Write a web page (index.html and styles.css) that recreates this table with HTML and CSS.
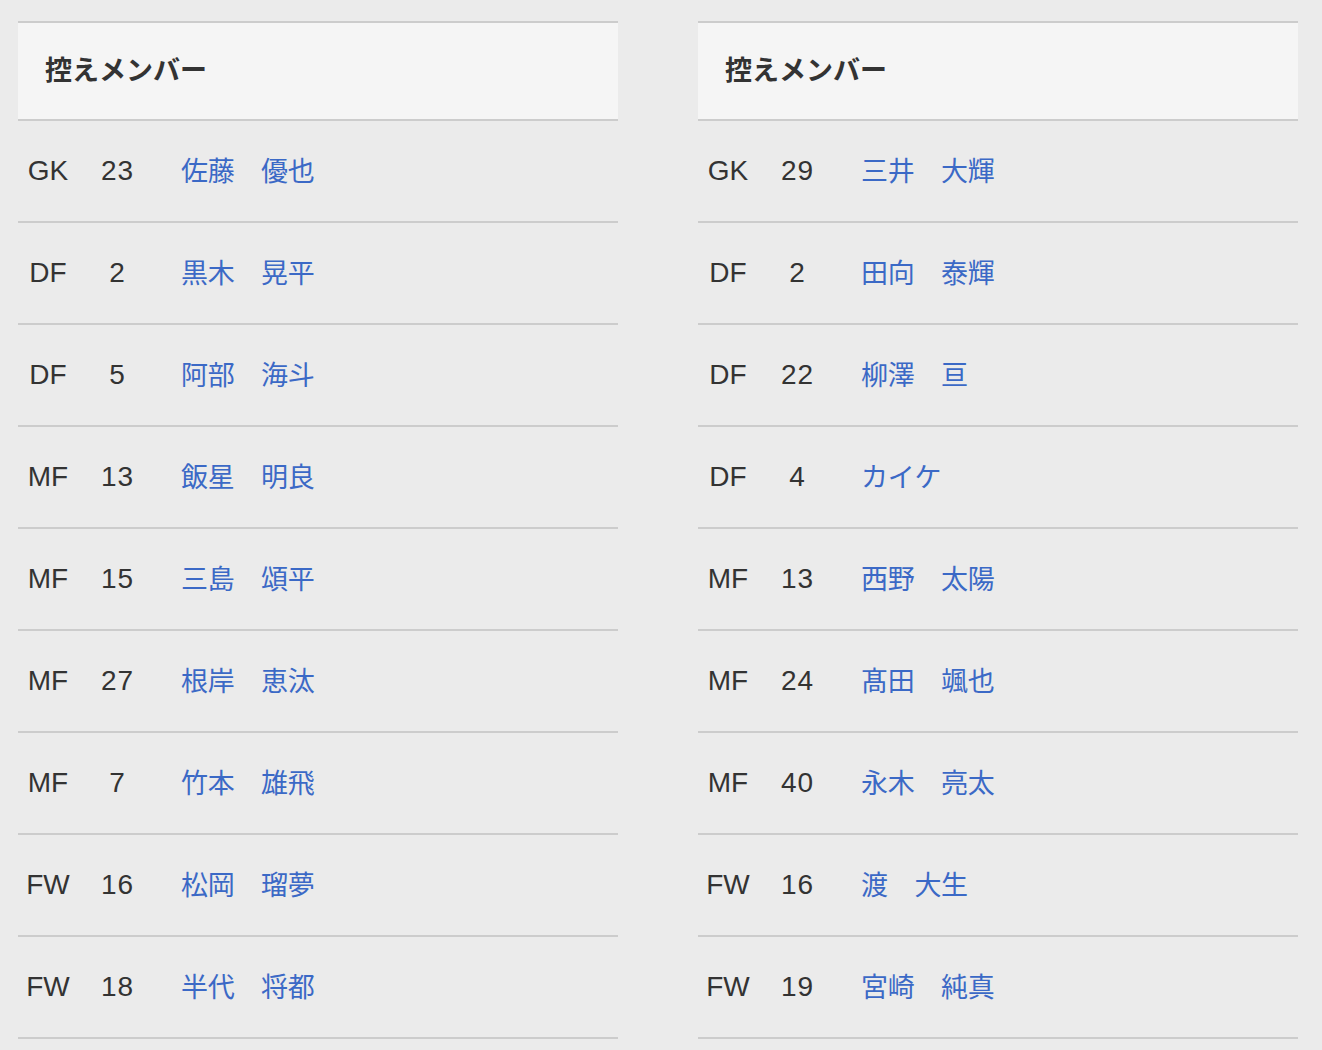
FILE: index.html
```html
<!DOCTYPE html>
<html lang="ja">
<head>
<meta charset="utf-8">
<link rel="stylesheet" href="styles.css">
</head>
<body>
<div class="page">
  <table class="members">
    <colgroup><col class="c-pos"><col class="c-num"><col class="c-name"></colgroup>
    <thead><tr><th colspan="3">控えメンバー</th></tr></thead>
    <tbody>
      <tr><td class="pos">GK</td><td class="num">23</td><td class="name"><a>佐藤　優也</a></td></tr>
      <tr><td class="pos">DF</td><td class="num">2</td><td class="name"><a>黒木　晃平</a></td></tr>
      <tr><td class="pos">DF</td><td class="num">5</td><td class="name"><a>阿部　海斗</a></td></tr>
      <tr><td class="pos">MF</td><td class="num">13</td><td class="name"><a>飯星　明良</a></td></tr>
      <tr><td class="pos">MF</td><td class="num">15</td><td class="name"><a>三島　頌平</a></td></tr>
      <tr><td class="pos">MF</td><td class="num">27</td><td class="name"><a>根岸　恵汰</a></td></tr>
      <tr><td class="pos">MF</td><td class="num">7</td><td class="name"><a>竹本　雄飛</a></td></tr>
      <tr><td class="pos">FW</td><td class="num">16</td><td class="name"><a>松岡　瑠夢</a></td></tr>
      <tr><td class="pos">FW</td><td class="num">18</td><td class="name"><a>半代　将都</a></td></tr>
    </tbody>
  </table>
  <table class="members">
    <colgroup><col class="c-pos"><col class="c-num"><col class="c-name"></colgroup>
    <thead><tr><th colspan="3">控えメンバー</th></tr></thead>
    <tbody>
      <tr><td class="pos">GK</td><td class="num">29</td><td class="name"><a>三井　大輝</a></td></tr>
      <tr><td class="pos">DF</td><td class="num">2</td><td class="name"><a>田向　泰輝</a></td></tr>
      <tr><td class="pos">DF</td><td class="num">22</td><td class="name"><a>柳澤　亘</a></td></tr>
      <tr><td class="pos">DF</td><td class="num">4</td><td class="name"><a>カイケ</a></td></tr>
      <tr><td class="pos">MF</td><td class="num">13</td><td class="name"><a>西野　太陽</a></td></tr>
      <tr><td class="pos">MF</td><td class="num">24</td><td class="name"><a>髙田　颯也</a></td></tr>
      <tr><td class="pos">MF</td><td class="num">40</td><td class="name"><a>永木　亮太</a></td></tr>
      <tr><td class="pos">FW</td><td class="num">16</td><td class="name"><a>渡　大生</a></td></tr>
      <tr><td class="pos">FW</td><td class="num">19</td><td class="name"><a>宮崎　純真</a></td></tr>
    </tbody>
  </table>
</div>
</body>
</html>
```
FILE: styles.css
```css
html, body {
  margin: 0;
  padding: 0;
  background: #ebebeb;
}
body {
  font-family: "Liberation Sans", "Noto Sans CJK JP", sans-serif;
  color: #333;
}
.page {
  display: flex;
  gap: 80px;
  padding: 21px 18px 0;
  align-items: flex-start;
}
.members {
  width: 600px;
  border-collapse: collapse;
  table-layout: fixed;
  border-top: 2px solid #cccccc;
}
.c-pos { width: 60px; }
.c-num { width: 78px; }
.members th {
  background: #f5f5f5;
  height: 98px;
  padding: 0 0 5px 27px;
  box-sizing: border-box;
  text-align: left;
  font-family: "Noto Sans CJK JP", sans-serif;
  font-weight: 700;
  font-size: 27px;
  color: #333;
  border-bottom: 2px solid #cccccc;
}
.members td {
  height: 100px;
  padding: 0;
  font-size: 28px;
  border-bottom: 2px solid #cccccc;
  vertical-align: middle;
}
.members td.pos {
  text-align: center;
}
.members td.num {
  text-align: center;
  letter-spacing: 1px;
  padding-left: 1px;
}
.members td.name {
  height: 96px;
  padding: 0 0 4px 25px;
}
.members td.name a {
  color: #3b69c6;
  font-family: "Noto Sans CJK JP", sans-serif;
  font-size: 27px;
  letter-spacing: -0.3px;
  text-decoration: none;
}
```
